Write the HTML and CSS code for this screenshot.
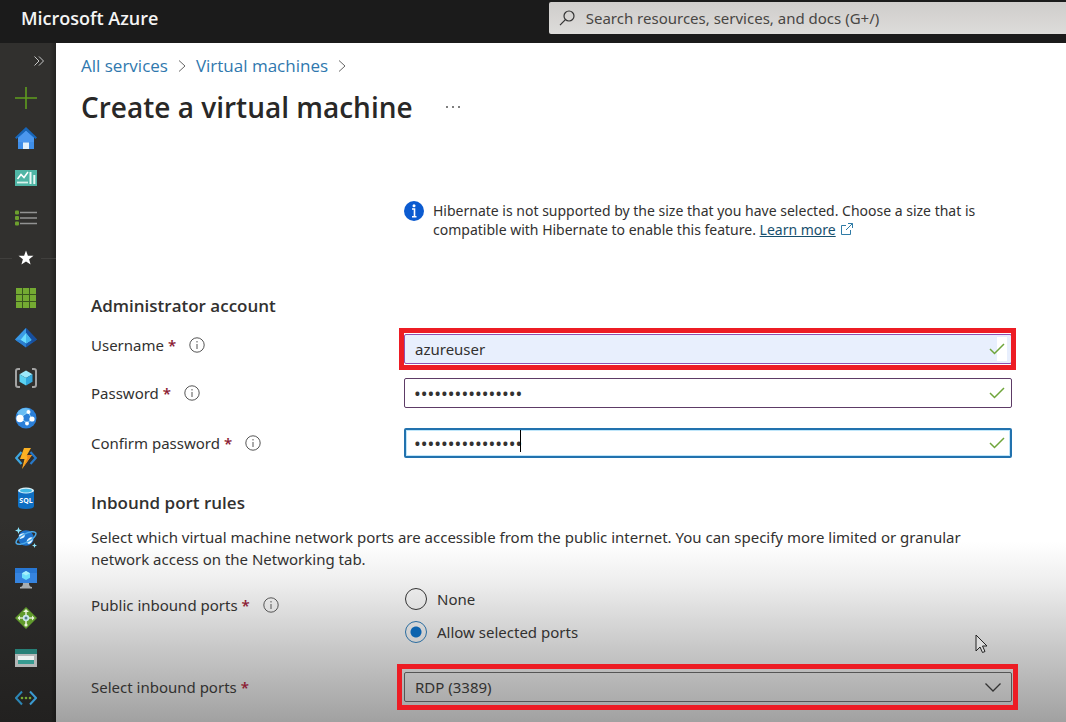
FILE: index.html
```html
<!DOCTYPE html>
<html lang="en">
<head>
<meta charset="utf-8">
<title>Create a virtual machine - Microsoft Azure</title>
<link rel="stylesheet" href="styles.css">
</head>
<body>
<header class="topbar">
  <a class="brand" href="#">Microsoft Azure</a>
  <label class="search">
    <svg width="16" height="16" viewBox="0 0 16 16" fill="none" stroke="#333" stroke-width="1.2"><circle cx="10" cy="6" r="5"/><path d="M6.4 9.6 1 15.2"/></svg>
    <input type="text" class="search-input" placeholder="Search resources, services, and docs (G+/)" aria-label="Search">
  </label>
</header>
<div class="shell">
  <nav class="sidebar" aria-label="Favorites">
    <button class="expand" type="button" aria-label="Expand menu"><svg width="10" height="10" viewBox="0 0 10 10" fill="none" stroke="#c8c8c8"><path d="M.5.5 5 5 .5 9.500M5 .5 9.500 5 5 9.500"/></svg></button>
    <ul class="nav-list">
      <li><a href="#" aria-label="Create a resource"><svg class="ico" viewBox="0 0 22 22" fill="none" stroke="#5f9d1e" stroke-width="1.600"><path d="M11 0v22M0 11h22"/></svg></a></li>
      <li><a href="#" aria-label="Home"><svg class="ico" viewBox="0 0 22 22"><path d="M3 10 11 3l8 7v12H3z" fill="#3f8ee8"/><path d="M11 0 0 10.500l1.500 1.500L11 3.500l9.500 8.500 1.500-1.500z" fill="#1765b8"/><path d="M3 11.500 11 4l8 7.500V15H3z" fill="#4b97ee"/><path d="M8 15.500h6V22H8z" fill="#e4f2fb"/></svg></a></li>
      <li><a href="#" aria-label="Dashboard"><svg class="ico" viewBox="0 0 22 22"><path d="M0 3h22v16H0z" fill="#4fb5a5"/><path d="m2.500 12 3.500-4.500 3 3L13 5" fill="none" stroke="#fff" stroke-width="1.500"/><path d="M2 15.500h11" stroke="#d8f2ec" stroke-width="1.800"/><path d="M15.500 5v12" stroke="#e7f7f4" stroke-width="2"/><path d="M19.300 8v9" stroke="#e7f7f4" stroke-width="2"/></svg></a></li>
      <li><a href="#" aria-label="All services"><svg class="ico" viewBox="0 0 22 22"><g fill="#6d9f2e"><rect y="3.500" width="4" height="4" rx="1"/><rect y="9" width="4" height="4" rx="1"/><rect y="14.500" width="4" height="4" rx="1"/></g><path d="M5 5.500h17M5 11h17M5 16.500h17" stroke="#929292" stroke-width="1.700"/></svg></a></li>
      <li class="divider"><a href="#" aria-label="Favorites"><svg class="ico" viewBox="0 0 22 22"><path d="m11 3.500 1.900 5.200 5.600.1-4.400 3.400 1.500 5.400-4.600-3.100-4.600 3.100 1.500-5.400-4.400-3.400 5.600-.1z" fill="#fff"/></svg></a></li>
      <li><a href="#" aria-label="All resources"><svg class="ico" viewBox="0 0 22 22"><path d="M1 1h20v20H1z" fill="#74aa32"/><path d="M7.500 1v20M14.500 1v20M1 7.500h20M1 14.500h20" stroke="#39551e" stroke-width="1"/></svg></a></li>
      <li><a href="#" aria-label="Microsoft Entra ID"><svg class="ico" viewBox="0 0 22 22"><path d="M11 1 22 12.500 11 20.500 0 12.500z" fill="#195aad"/><path d="M11 1 0 12.500l5 3.500 6-10z" fill="#3a9ae6"/><path d="m11 1 11 11.500-5 3.500-6-10z" fill="#174f9f"/><path d="m11 6 5.500 7-5.500 3.500L5.500 13z" fill="#6cdcff"/><path d="M11 6v10.500l5.500-3.500z" fill="#45b6ee"/><path d="m0 12.500 5.500 .5L11 16.500V20.500z" fill="#2b7fd0"/></svg></a></li>
      <li><a href="#" aria-label="Resource groups"><svg class="ico" viewBox="0 0 22 22"><path d="M5 2H3Q1 2 1 4v14q0 2 2 2h2M17 2h2q2 0 2 2v14q0 2-2 2h-2" fill="none" stroke="#a3a3a3" stroke-width="2"/><path d="m11 3.500 6.500 3.700L11 11 4.500 7.200z" fill="#9de9fb"/><path d="M4.500 7.200 11 11v7.500l-6.500-3.700z" fill="#5bd2f2"/><path d="M17.500 7.200 11 11v7.500l6.500-3.700z" fill="#31a8dd"/></svg></a></li>
      <li><a href="#" aria-label="App Services"><svg class="ico" viewBox="0 0 22 22"><circle cx="11" cy="11" r="10.500" fill="#2b7fd8"/><path d="M2 6q5-7 13-4l-2 4-8 4z" fill="#68bdf4"/><path d="m5 11 8-6 4 7-5 4z" fill="none" stroke="#8dd2f8"/><g fill="#fff"><circle cx="5" cy="11.500" r="3.700"/><circle cx="13.500" cy="5" r="2"/><circle cx="17" cy="12" r="2.600"/><circle cx="12" cy="16.500" r="1.900"/></g></svg></a></li>
      <li><a href="#" aria-label="Function App"><svg class="ico" viewBox="0 0 22 22"><g fill="none" stroke-width="2.200"><path d="M6.500 5 1.200 11l5.300 6" stroke="#3ea7e0"/><path d="m15.500 5 5.300 6-5.300 6" stroke="#2879c9"/></g><path d="M9 1h7l-4 7h5L7 22l2.500-10H5z" fill="#fbb124"/><path d="M11.500 8H17L7 22l5.500-11z" fill="#ed8b1c"/></svg></a></li>
      <li><a href="#" aria-label="SQL databases"><svg class="ico" viewBox="0 0 22 22"><path d="M3 3v16q0 3 8 3t8-3V3z" fill="#0f6fc3"/><ellipse cx="11" cy="3.500" rx="8" ry="3" fill="#d9f1fa"/><ellipse cx="11" cy="3.700" rx="6" ry="1.900" fill="#43b9e5"/><text class="sql" x="11" y="15.500" text-anchor="middle">SQL</text></svg></a></li>
      <li><a href="#" aria-label="Azure Cosmos DB"><svg class="ico" viewBox="0 0 22 22"><circle cx="11" cy="11" r="7.800" fill="#1e73cc"/><path d="M4 8q4-3 6-1 0 3-2 4l-3 1zM12 13q3-4 6-2 0 4-4 6-3-1-2-4z" fill="#eaf7fe"/><ellipse cx="11" cy="11" rx="11" ry="4.200" fill="none" stroke="#4ba9e9" stroke-width="1.500" transform="rotate(-28 11 11)"/><path d="m3.500 0 .9 2.600L7 3.500l-2.600.9L3.500 7l-.9-2.600L0 3.500l2.600-.9zM19.500 16l.7 1.800 1.800.7-1.800.7-.7 1.800-.7-1.800-1.800-.7 1.800-.7z" fill="#8ce4fc"/></svg></a></li>
      <li><a href="#" aria-label="Virtual machines"><svg class="ico" viewBox="0 0 22 22"><path d="M0 1h22v15H0z" fill="#3684df"/><path d="M0 1h22v5H0z" fill="#2877d3"/><path d="m11 4 4 2.200v4.600L11 13l-4-2.200V6.200z" fill="#6de0fb"/><path d="m7 6.200 4 2.200 4-2.200L11 4z" fill="#a6effc"/><path d="M8 16h6q0 4 3 4v1.500H5V20q3 0 3-4" fill="#a8adb0"/></svg></a></li>
      <li><a href="#" aria-label="Load balancers"><svg class="ico" viewBox="0 0 22 22"><path d="m11 0 11 11-11 11L0 11z" fill="#609a2c"/><path d="M11 4v13M4 11h14" stroke="#dceac9" stroke-width="1.600"/><path d="M8 5 11 2l3 3zM5 8.500 2.500 11 5 13.500zM17 8.500l2.500 2.500-2.500 2.500z" fill="#eaf4dc"/><circle cx="11" cy="11" r="3.200" fill="#cde8ef"/><circle cx="11" cy="11" r="1.500" fill="#527d88"/><circle cx="11" cy="18" r="1.600" fill="#eaf4dc"/></svg></a></li>
      <li><a href="#" aria-label="Storage accounts"><svg class="ico" viewBox="0 0 22 22"><path d="M0 2h22v18H0z" fill="#b2b6b6"/><path d="M0 2h22v5H0z" fill="#267f76"/><path d="M3 9h16v4H3z" fill="#ecf1f0"/><path d="M3 13h16v4H3z" fill="#379b91"/></svg></a></li>
      <li><a href="#" aria-label="Virtual networks"><svg class="ico" viewBox="0 0 22 22"><g fill="none" stroke-width="2"><path d="m7 4.500-6 6.500 6 6.500" stroke="#2c86b5"/><path d="m15 4.500 6 6.500-6 6.500" stroke="#3b9ad0"/></g><g fill="#75a832"><circle cx="7" cy="11" r="1.300"/><circle cx="11" cy="11" r="1.300"/><circle cx="15" cy="11" r="1.300"/></g></svg></a></li>
    </ul>
  </nav>
  <main class="main">
    <nav class="crumbs" aria-label="Breadcrumb">
      <a href="#">All services</a>
      <svg width="8" height="12" viewBox="0 0 8 12" fill="none" stroke="#666"><path d="m1 .5 6 5.500-6 5.500"/></svg>
      <a href="#">Virtual machines</a>
      <svg width="8" height="12" viewBox="0 0 8 12" fill="none" stroke="#666"><path d="m1 .5 6 5.500-6 5.500"/></svg>
    </nav>
    <div class="title-row">
      <h1>Create a virtual machine</h1>
      <button class="more" type="button" aria-label="More"><svg width="16" height="4" viewBox="0 0 16 4" fill="#555"><circle cx="2" cy="2" r="1"/><circle cx="8" cy="2" r="1"/><circle cx="14" cy="2" r="1"/></svg></button>
    </div>
    <form class="form">
      <div class="notice">
        <svg class="notice-ico" width="20" height="20" viewBox="0 0 20 20"><circle cx="10" cy="10" r="10" fill="#0b5bd0"/><circle cx="10" cy="4.800" r="1.500" fill="#fff"/><path d="M8 8h2.500v7.500M8 15.800h4.500" fill="none" stroke="#fff" stroke-width="1.600"/></svg>
        <p>Hibernate is not supported by the size that you have selected. Choose a size that is compatible with Hibernate to enable this feature. <a href="#">Learn more</a> <svg class="ext" width="12" height="12" viewBox="0 0 12 12" fill="none" stroke="#2f7ba6"><path d="M5 2.500H.5v9h9V7M7 .5h4.500V5M11.500.5 5 7"/></svg></p>
      </div>

      <h2>Administrator account</h2>
      <div class="row first">
        <div class="label"><label for="user">Username <b>*</b></label><svg class="info" viewBox="0 0 16 16"><circle cx="8" cy="8" r="7.200"/><path d="M8 7v5M8 4v1.500"/></svg></div>
        <div class="field marked"><input id="user" class="box filled" type="text" value="azureuser"><span class="tick tick-patch"><svg viewBox="0 0 16 12"><path d="m1 6 4.500 4.500L15 1"/></svg></span></div>
      </div>
      <div class="row">
        <div class="label"><label for="pw">Password <b>*</b></label><svg class="info" viewBox="0 0 16 16"><circle cx="8" cy="8" r="7.200"/><path d="M8 7v5M8 4v1.500"/></svg></div>
        <div class="field"><input id="pw" class="box secret" type="password" value="abcdefghijklmnop"><span class="tick"><svg viewBox="0 0 16 12"><path d="m1 6 4.500 4.500L15 1"/></svg></span></div>
      </div>
      <div class="row">
        <div class="label"><label for="pw2">Confirm password <b>*</b></label><svg class="info" viewBox="0 0 16 16"><circle cx="8" cy="8" r="7.200"/><path d="M8 7v5M8 4v1.500"/></svg></div>
        <div class="field"><input id="pw2" class="box secret active" type="password" value="abcdefghijklmnop"><span class="caret"></span><span class="tick"><svg viewBox="0 0 16 12"><path d="m1 6 4.500 4.500L15 1"/></svg></span></div>
      </div>

      <h2 class="second">Inbound port rules</h2>
      <p class="desc">Select which virtual machine network ports are accessible from the public internet. You can specify more limited or granular network access on the Networking tab.</p>
      <div class="row top">
        <div class="label"><span>Public inbound ports <b>*</b></span><svg class="info" viewBox="0 0 16 16"><circle cx="8" cy="8" r="7.200"/><path d="M8 7v5M8 4v1.500"/></svg></div>
        <div class="radios">
          <label><input type="radio" name="ports">None</label>
          <label><input type="radio" name="ports" checked>Allow selected ports</label>
        </div>
      </div>
      <div class="row last">
        <div class="label"><label for="inbound">Select inbound ports <b>*</b></label></div>
        <div class="field marked wide"><select id="inbound" class="box drop"><option>RDP (3389)</option></select><svg class="arrow" width="16" height="9" viewBox="0 0 16 9" fill="none" stroke="#333" stroke-width="1.300"><path d="m.5.500 7.500 7.500L15.500.500"/></svg></div>
      </div>
    </form>
  </main>
</div>
<svg class="pointer" width="13" height="20" viewBox="0 0 13 20"><path d="M1 1v16l4-4 2.500 5.500L10 17.500 7.500 12H12z" fill="#dcdcdc" stroke="#222"/></svg>
</body>
</html>
```
FILE: styles.css
```css
* { box-sizing: border-box; }
body {
  margin: 0;
  min-height: 100vh;
  display: flex;
  flex-direction: column;
  font-family: "Noto Sans", "Open Sans", sans-serif;
  font-size: 15px;
  line-height: 22px;
  color: #323130;
  background: #fff;
}
button { border: 0; padding: 0; background: none; }
a { color: #2f78ae; text-decoration: none; }
svg { display: block; flex: none; }

.topbar {
  display: flex;
  align-items: flex-start;
  justify-content: space-between;
  height: 43px;
  padding: 2px 0 0 21px;
  background: #1b1b1b;
}
.brand, .crumbs, h1, h2 { font-family: "Open Sans", "Noto Sans", sans-serif; }
.brand { color: #f4f4f4; font-size: 18px; font-weight: 600; line-height: 32px; }
.search {
  display: flex;
  align-items: center;
  gap: 11px;
  width: 49.5%;
  height: 32px;
  padding-left: 10px;
  border-radius: 2px 0 0 2px;
  background: linear-gradient(#cfcdcb, #dddcda);
}
.search-input { flex: 1; border: 0; padding: 0; background: none; font: inherit; outline: 0; }
.search-input::placeholder { color: #484644; opacity: 1; }

.shell { display: flex; flex: 1; }
.sidebar {
  width: 56px;
  flex: none;
  background: linear-gradient(90deg, #0000 50px, #0004), linear-gradient(#31302e 70%, #222120);
}
.expand { display: flex; margin-left: 34px; height: 35px; align-items: center; }
.nav-list { margin: 0; padding: 0; list-style: none; }
.nav-list li { display: flex; align-items: center; height: 40px; padding-left: 15px; }
.ico { width: 22px; height: 22px; }
.divider { background: linear-gradient(90deg, #403f3d 12px, #0000 12px 41px, #403f3d 41px) center / 100% 1px no-repeat; }
.sql { font: 700 7px "Open Sans", sans-serif; fill: #fff; }

.main {
  flex: 1;
  padding: 10px 54px 0 25px;
  background: linear-gradient(#fff 0, #fff calc(100% - 180px), #eee calc(100% - 140px), #c9c9c9 calc(100% - 76px), #a1a1a1 100%);
}
.crumbs { display: flex; align-items: center; gap: 10px; height: 26px; font-size: 17px; }
.title-row { display: flex; align-items: center; gap: 32px; height: 56px; }
h1 { margin: 0; font-size: 28px; font-weight: 600; line-height: 40px; color: #292827; }
.form { padding-left: 10px; }

.notice { display: flex; gap: 9px; margin: 66px 0 0 313px; line-height: 19px; font-size: 14px; }
.notice p { margin: 0; }
.notice a { color: #17506e; text-decoration: underline; }
.ext { display: inline-block; margin-left: 2px; }

h2 { margin: 55px 0 12px; font-size: 17px; font-weight: 600; line-height: 24px; }
h2.second { margin: 33px 0 11px; }
.row { display: flex; align-items: center; margin-bottom: 20px; }
.row.first { align-items: flex-start; margin-bottom: 14px; }
.row.top { align-items: flex-start; margin-bottom: 29px; }
.row.last { margin-bottom: 0; }
.label { display: flex; align-items: center; gap: 13px; width: 313px; flex: none; }
.first .label { height: 30px; }
.top .label { padding-top: 6px; }
.label b { color: #8c1c34; font-weight: 600; }
.info { width: 16px; height: 16px; fill: none; stroke: #555; }
.field { position: relative; flex: 1; }
.first .field { margin-top: 4px; }
.box {
  display: block;
  width: 100%;
  height: 30px;
  padding: 0 10px;
  border: 1px solid #5d3b66;
  border-radius: 2px;
  background: #fff;
  font: inherit;
  color: #323130;
  outline: 0;
}
.filled { border-color: #8f4fb0; background: #e8effd; }
.secret { font-size: 18px; padding: 0 9px; }
.active { border: 2px solid #2272ae; padding: 0 8px; box-shadow: inset 0 0 0 1px #bfe6fa; }
.marked::after {
  content: "";
  position: absolute;
  inset: -6px -4px -6px -5px;
  border: 5px solid #ed1c24;
  pointer-events: none;
}
.wide::after { inset: -8px -6px -8px -7px; }
.tick { position: absolute; top: 0; bottom: 0; right: 7px; display: flex; align-items: center; }
.tick svg { width: 16px; height: 12px; fill: none; stroke: #6fa53a; stroke-width: 1.500; }
.tick-patch { top: 3px; bottom: 3px; right: 5px; padding-right: 2px; background: linear-gradient(90deg, #0000 8px, #fff 8px); }
.caret { position: absolute; left: 116px; top: 2px; width: 1px; height: 22px; background: #000; }

.desc { margin: 0 0 18px; }
.radios { display: grid; gap: 11px; }
.radios label { display: flex; align-items: center; gap: 10px; height: 22px; padding-left: 1px; }
.radios input {
  appearance: none;
  width: 22px;
  height: 22px;
  margin: 0;
  border: 1px solid #333;
  border-radius: 50%;
}
.radios input:checked { border-color: #2b6da0; background: radial-gradient(circle, #0c63ae 5px, #0000 6px); }
.drop { appearance: none; background: none; border-color: #555; }
.arrow { position: absolute; right: 11px; top: 11px; }
.pointer { position: absolute; left: 91.500%; top: 634px; }
```
